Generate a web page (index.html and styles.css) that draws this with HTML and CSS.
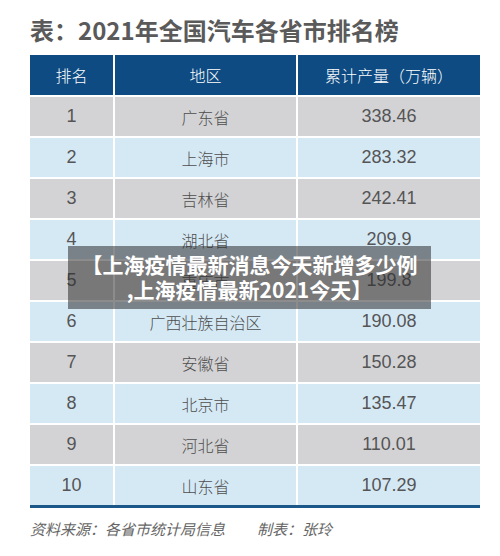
FILE: index.html
```html
<!DOCTYPE html>
<html lang="zh-CN">
<head>
    <meta charset="UTF-8">
    <meta name="viewport" content="width=device-width, initial-scale=1.0">
    <title>2021年全国汽车各省市排名榜</title>
    <link rel="stylesheet" href="styles.css">
</head>
<body>
    <div class="page">
        <h1 class="title">表：2021年全国汽车各省市排名榜</h1>
        <div class="rank-table">
            <div class="row head">
                <div class="cell">排名</div>
                <div class="cell">地区</div>
                <div class="cell">累计产量（万辆）</div>
            </div>
            <div class="row odd">
                <div class="cell num">1</div>
                <div class="cell">广东省</div>
                <div class="cell num">338.46</div>
            </div>
            <div class="row even">
                <div class="cell num">2</div>
                <div class="cell">上海市</div>
                <div class="cell num">283.32</div>
            </div>
            <div class="row odd">
                <div class="cell num">3</div>
                <div class="cell">吉林省</div>
                <div class="cell num">242.41</div>
            </div>
            <div class="row even">
                <div class="cell num">4</div>
                <div class="cell">湖北省</div>
                <div class="cell num">209.9</div>
            </div>
            <div class="row odd">
                <div class="cell num">5</div>
                <div class="cell">重庆市</div>
                <div class="cell num">199.8</div>
            </div>
            <div class="row even">
                <div class="cell num">6</div>
                <div class="cell">广西壮族自治区</div>
                <div class="cell num">190.08</div>
            </div>
            <div class="row odd">
                <div class="cell num">7</div>
                <div class="cell">安徽省</div>
                <div class="cell num">150.28</div>
            </div>
            <div class="row even">
                <div class="cell num">8</div>
                <div class="cell">北京市</div>
                <div class="cell num">135.47</div>
            </div>
            <div class="row odd">
                <div class="cell num">9</div>
                <div class="cell">河北省</div>
                <div class="cell num">110.01</div>
            </div>
            <div class="row even">
                <div class="cell num">10</div>
                <div class="cell">山东省</div>
                <div class="cell num">107.29</div>
            </div>
        </div>
        <p class="source"><span>资料来源：各省市统计局信息</span><span>制表：张玲</span></p>

        <!-- 标题浮层 -->
        <div class="caption">【上海疫情最新消息今天新增多少例<br>,上海疫情最新2021今天】</div>
    </div>
</body>
</html>
```

FILE: styles.css
```css
body {
    margin: 0;
    padding: 0;
    background-color: #fff;
    font-family: "Noto Sans CJK SC", "Noto Sans", sans-serif;
}

.page {
    position: relative;
    width: 500px;
    height: 556px;
    padding: 15px 20px 0 30px;
    box-sizing: border-box;
}

.title {
    margin: 0 0 10px 0;
    font-size: 24px;
    line-height: 30px;
    font-weight: bold;
    color: #5a5a5a;
}

.rank-table {
    display: flex;
    flex-direction: column;
    gap: 2px;
    width: 450px;
    border-bottom: 3px solid #1b5789;
}

.row {
    display: grid;
    grid-template-columns: 83px 181px 182px;
    gap: 2px;
    height: 39px;
}

.row.head {
    height: 40px;
}

.cell {
    display: flex;
    justify-content: center;
    align-items: center;
    font-size: 16px;
    font-weight: 300;
    color: #4e4e4e;
}

.cell.num {
    font-family: "Liberation Sans", "Noto Sans CJK SC", sans-serif;
    font-size: 18px;
    font-weight: normal;
    color: #555;
}

.head .cell {
    background-color: #0d4b82;
    color: #fff;
}

.odd .cell {
    background-color: #d3d3d5;
}

.even .cell {
    background-color: #d5e9f5;
}

.source {
    display: flex;
    gap: 32px;
    margin: 11px 0 0 0;
    font-size: 15px;
    line-height: 20px;
    font-style: italic;
    color: #666;
}

.caption {
    position: absolute;
    left: 68px;
    top: 246px;
    width: 363px;
    height: 63px;
    padding-top: 6px;
    box-sizing: border-box;
    background-color: rgba(45, 45, 45, 0.55);
    color: #fff;
    font-size: 21px;
    line-height: 25px;
    font-weight: bold;
    text-align: center;
}
```
